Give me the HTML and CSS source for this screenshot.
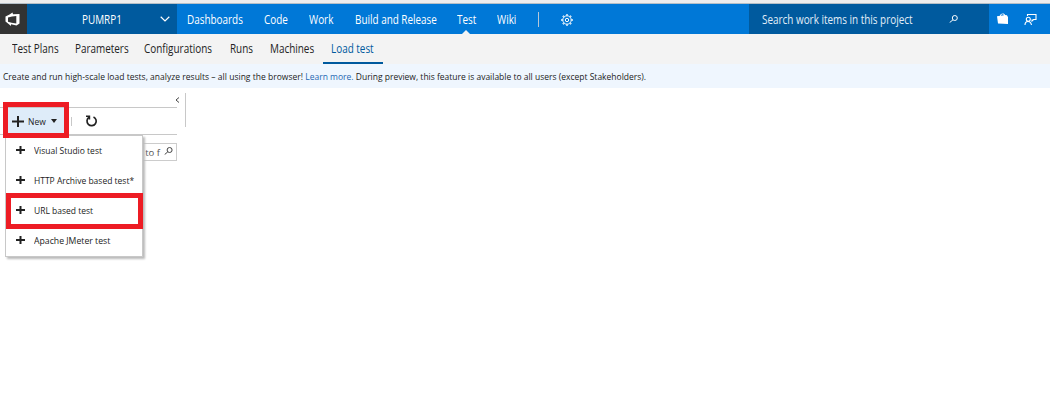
FILE: index.html
```html
<!DOCTYPE html>
<html lang="en">
<head>
<meta charset="utf-8">
<title>Load test</title>
<link rel="stylesheet" href="styles.css">
</head>
<body>
<header class="topbar">
  <div class="logo"><svg width="16" height="15" viewBox="0 0 16 15"><path fill="#fff" fill-rule="evenodd" d="M.5 4.500 4.500 2.500 7.500.5l.5 1.800L14.500 2v9.500L11.500 13.500 6 12.200V14L3 11.500.5 9.500ZM3 5.500v4.300l3.500 1 4.800.7V4L7 4.400Z"/></svg></div>
  <div class="project"><span class="nav-text">PUMRP1</span><svg class="chevron" width="10" height="6" viewBox="0 0 10 6"><path d="m.7.7 4.300 4.200L9.300.7" fill="none" stroke="#fff" stroke-width="1.200"/></svg></div>
  <nav class="hubs">
    <a><span class="nav-text">Dashboards</span></a><a><span class="nav-text">Code</span></a><a><span class="nav-text">Work</span></a><a><span class="nav-text">Build and Release</span></a><a class="current"><span class="nav-text">Test</span></a><a><span class="nav-text">Wiki</span></a>
  </nav>
  <i class="divider"></i>
  <svg class="gear" width="12" height="12" viewBox="0 0 12 12" fill="none" stroke="#fff"><circle cx="6" cy="6" r="4.200"/><circle cx="6" cy="6" r="1.700"/><path stroke-width="1.800" d="M6 .3v1.200M6 10.500v1.200M.3 6h1.200M10.500 6h1.200M1.900 1.900l.8.8M9.300 9.300l.8.8M1.900 10.100l.8-.8M9.300 2.700l.8-.8"/></svg>
  <div class="search"><span class="nav-text">Search work items in this project</span><svg width="9" height="8" viewBox="0 0 9 8" fill="none" stroke="#fff"><circle cx="5.800" cy="3" r="2.500"/><path d="M4 4.800.7 7.500"/></svg></div>
  <svg class="bag" width="12" height="12" viewBox="0 0 12 12"><path fill="#fff" fill-rule="evenodd" d="m0 3.300 3-.5C3.200.2 7.500-.5 8 2l2 .3.500 1.200.5.3V11L1 10.500ZM4 2.700 7 2.200C6.500.8 4.300 1.200 4 2.700Z"/></svg>
  <svg class="feedback" width="13" height="13" viewBox="0 0 13 13" fill="none" stroke="#fff" stroke-width="1.100"><path d="M3.500 3V1.500h8.500v5H9.500L8 8V6.500M1 12c0-2.500 1-3.500 3-3.500S7 9.500 7.500 12"/><circle cx="4.300" cy="6.200" r="2"/></svg>
</header>
<nav class="subnav">
  <a><span class="nav-text">Test Plans</span></a><a><span class="nav-text">Parameters</span></a><a><span class="nav-text">Configurations</span></a><a><span class="nav-text">Runs</span></a><a><span class="nav-text">Machines</span></a><a class="selected"><span class="nav-text">Load test</span></a>
</nav>
<div class="notice"><span class="small-text"><span class="lead">Create and run high-scale load tests, analyze results – all using the browser!</span> <a>Learn more.</a> During preview, this feature is available to all users (except Stakeholders).</span></div>
<main class="content">
  <aside class="panel">
    <div class="collapse"><svg width="5" height="6" viewBox="0 0 5 6"><path d="M4 .5 1 3l3 2.500" fill="none" stroke="#444"/></svg></div>
    <div class="toolbar">
      <button class="new"><svg width="12" height="11" viewBox="0 0 12 11"><path d="M6 0v11M0 5.500h12" stroke="#222" stroke-width="2"/></svg><span class="small-text">New</span><i class="caret"></i></button>
      <i class="tool-divider"></i>
      <svg class="refresh" width="13" height="12" viewBox="0 0 13 12" fill="none" stroke="#222" stroke-width="1.700"><path d="M4 2.300A4.600 4.600 0 1 0 8.500 1.900"/><path d="M1 1.200h3.500V4.500" stroke-width="1.400"/></svg>
    </div>
    <div class="filter"><span class="filter-text">g to f</span><svg width="9" height="8" viewBox="0 0 9 8" fill="none" stroke="#444"><circle cx="5.600" cy="3" r="2.500"/><path d="M3.800 4.800.7 7.500"/></svg></div>
    <ul class="menu">
      <li><svg width="9" height="8" viewBox="0 0 9 8"><path d="M4.500 0v8M0 4h9" stroke="#222" stroke-width="2"/></svg><span class="small-text">Visual Studio test</span></li>
      <li><svg width="9" height="8" viewBox="0 0 9 8"><path d="M4.500 0v8M0 4h9" stroke="#222" stroke-width="2"/></svg><span class="small-text">HTTP Archive based test*</span></li>
      <li><svg width="9" height="8" viewBox="0 0 9 8"><path d="M4.500 0v8M0 4h9" stroke="#222" stroke-width="2"/></svg><span class="small-text">URL based test</span></li>
      <li><svg width="9" height="8" viewBox="0 0 9 8"><path d="M4.500 0v8M0 4h9" stroke="#222" stroke-width="2"/></svg><span class="small-text wide">Apache JMeter test</span></li>
    </ul>
    <div class="highlight highlight-new"></div>
    <div class="highlight highlight-url"></div>
  </aside>
  <i class="splitter"></i>
</main>
</body>
</html>
```
FILE: styles.css
```css
* { box-sizing: border-box; }
body { margin: 0; height: 409px; overflow: hidden; background: #fff; font: 12px "Open Sans", "Noto Sans", sans-serif; color: #222; white-space: nowrap; }
svg { display: block; flex: none; }
.nav-text, .small-text { display: inline-block; transform-origin: 0 50%; }
.nav-text { transform: scaleX(.826); }
.small-text { transform: scaleX(.894); }
.small-text.wide { transform: scaleX(.915); }
.topbar { display: flex; align-items: center; height: 34px; border-top: 3px solid #ededed; background: #0078d7; color: #fff; box-shadow: inset 0 1px #b5bfc7; }
.logo { width: 27px; height: 30px; margin-top: 1px; padding: 8px 0 0 5px; background: #333; }
.project { display: flex; align-items: center; width: 150px; height: 30px; margin-top: 1px; padding-left: 55px; background: #005a9e; }
.project span { width: 78px; }
.hubs { display: grid; grid-template-columns: 77px 45px 46px 102px 40px 31px; margin: 1px 0 0 10px; height: 30px; line-height: 32px; }
.hubs a { height: 30px; }
.current { position: relative; }
.current::after { content: ""; position: absolute; left: 5px; bottom: 0; border: 4px solid transparent; border-top: 0; border-bottom-color: #f3f3f3; }
.divider { width: 1px; height: 15px; margin: 1px 0 0 10px; background: #b5c7d8; }
.gear { margin: 2px 0 0 22px; }
.search { display: flex; align-items: center; width: 240px; height: 30px; margin: 1px 0 0 176px; padding-left: 13px; background: #005a9e; color: #e2eef8; }
.search span { width: 187px; }
.bag { margin: 1px 0 0 8px; }
.feedback { margin: 1px 0 0 15px; }
.subnav { display: grid; grid-template-columns: 63px 69px 86px 40px 53px 60px; height: 30px; padding-left: 12px; background: #f3f3f3; line-height: 30px; }
.selected { height: 30px; padding-left: 8px; border-bottom: 2px solid #005a9e; color: #005a9e; }
.notice { height: 24px; padding-left: 3px; background: #eff6fe; font-size: 9.500px; line-height: 25px; }
.notice a { color: #1f68b3; }
.lead { letter-spacing: .024px; }
.content { display: flex; height: 321px; }
.panel { position: relative; width: 185px; }
.collapse { display: flex; height: 19px; padding: 9px 0 0 175px; }
.toolbar { display: flex; align-items: center; width: 177px; height: 28px; border: solid #c8c8c8; border-width: 1px 0; }
.new { display: flex; align-items: center; width: 58px; height: 26px; margin-left: 7px; padding: 0 0 0 5px; border: 0; background: #deecf9; color: #222; font: 9.500px "Open Sans", sans-serif; }
.new span { width: 22px; margin-left: 4px; text-align: left; }
.caret { margin-left: 1px; border: 3.500px solid transparent; border-top: 4px solid #222; border-bottom: 0; }
.tool-divider { width: 1px; height: 9px; margin-left: 6px; background: #c8c8c8; }
.refresh { margin-left: 13px; }
.filter { display: flex; align-items: center; justify-content: flex-end; gap: 4px; width: 172px; height: 18px; margin: 8px 0 0 5px; padding-right: 3px; border: 1px solid #ccc; font-size: 9.500px; color: #555; }
.filter svg { margin-top: -3px; }
.menu { position: absolute; left: 5px; top: 47px; width: 138px; height: 122px; margin: 0; padding: 0; border: 1px solid #c8c8c8; background: #fff; box-shadow: 2px 2px 2px #bbb; list-style: none; font-size: 9.500px; }
.menu li { display: flex; align-items: center; gap: 9px; height: 30px; margin-top: 0; padding: 0 0 2px 10px; }
.highlight { position: absolute; border: 5px solid #ed1c24; }
.highlight-new { left: 3px; top: 14px; width: 66px; height: 36px; }
.highlight-url { left: 6px; top: 105px; width: 137px; height: 36px; }
.splitter { width: 1px; height: 34px; margin-top: 5px; background: #c8c8c8; }
```
